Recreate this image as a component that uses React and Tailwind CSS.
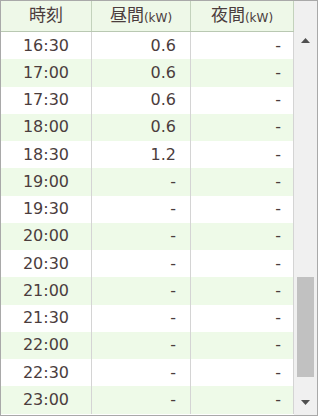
// Time-slot power table (day / night kW) with a fake scroll bar
const rows = [
  ['16:30', '0.6', '-'],
  ['17:00', '0.6', '-'],
  ['17:30', '0.6', '-'],
  ['18:00', '0.6', '-'],
  ['18:30', '1.2', '-'],
  ['19:00', '-', '-'],
  ['19:30', '-', '-'],
  ['20:00', '-', '-'],
  ['20:30', '-', '-'],
  ['21:00', '-', '-'],
  ['21:30', '-', '-'],
  ['22:00', '-', '-'],
  ['22:30', '-', '-'],
  ['23:00', '-', '-'],
];

const font = { fontFamily: '"DejaVu Sans", "Noto Sans CJK JP", sans-serif' };

export default function App() {
  return (
    <div className="w-[318px] h-[419px] bg-white" style={font}>
      <div className="flex h-[416px] border border-[#a9a9a9] text-[#4b3d3d]">
        <div className="flex flex-col">
          {/* header */}
          <div className="flex h-[31px] bg-[#eef8e8] border-b border-[#b9c8b2] text-[17px]">
            <div className="w-[91px] border-r border-[#c3d2bc] flex items-center justify-center">時刻</div>
            <div className="w-[99px] border-r border-[#c3d2bc] flex items-center justify-center">
              昼間<span className="text-[12px] mt-[3px]">(kW)</span>
            </div>
            <div className="w-[103px] border-r border-[#c3d2bc] flex items-center justify-center">
              夜間<span className="text-[12px] mt-[3px]">(kW)</span>
            </div>
          </div>
          {/* body */}
          {rows.map(([time, day, night], i) => (
            <div
              key={time}
              className={`flex h-[27.25px] text-[16px] ${i % 2 ? 'bg-[#eefae8]' : 'bg-white'}`}
            >
              <div className="w-[91px] border-r border-[#d4d4d4] flex items-center justify-center">{time}</div>
              <div className="w-[99px] border-r border-[#d4d4d4] flex items-center justify-end pr-[14px]">{day}</div>
              <div className="w-[103px] border-r border-[#d4d4d4] flex items-center justify-end pr-[12px]">{night}</div>
            </div>
          ))}
        </div>
        {/* scroll bar */}
        <div className="flex-1 bg-[#f0f0f0] flex flex-col items-center">
          <div className="h-[31px]" />
          <div className="h-[17px] flex items-center justify-center">
            <svg width="9" height="5" viewBox="0 0 9 5">
              <path d="M0 5 L4.5 0 L9 5 Z" fill="#505050" />
            </svg>
          </div>
          <div className="flex-1 w-full flex flex-col px-[3px]">
            <div className="h-[228px]" />
            <div className="h-[100px] bg-[#c1c1c1]" />
          </div>
          <div className="h-[25px] flex items-center justify-center">
            <svg width="9" height="5" viewBox="0 0 9 5">
              <path d="M0 0 L9 0 L4.5 5 Z" fill="#505050" />
            </svg>
          </div>
        </div>
      </div>
    </div>
  );
}
